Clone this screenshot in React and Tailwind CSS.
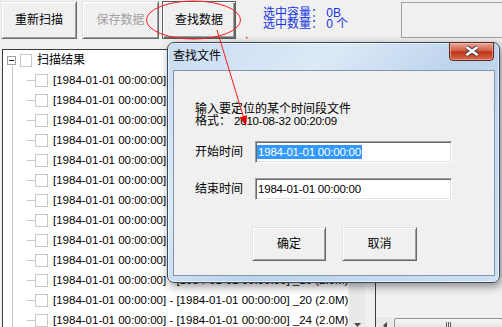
import React from 'react';

const font = "font-['Liberation_Sans','Noto_Sans_CJK_SC',sans-serif]";
const btn3d =
  'bg-[#f0f0f0] border border-t-[#e3e3e3] border-l-[#e3e3e3] border-r-[#696969] border-b-[#696969] shadow-[inset_1px_1px_#ffffff,inset_-1px_-1px_#a0a0a0]';
const sunken =
  'bg-white border border-t-[#a0a0a0] border-l-[#a0a0a0] border-r-white border-b-white shadow-[inset_1px_1px_#696969,inset_-1px_-1px_#e3e3e3]';
const stamp = '[1984-01-01 00:00:00]';
const suffixes = ['_00', '_01', '_02', '_04', '_05', '_06', '_08', '_10', '_12', '_14', '_16', '_20', '_24'];

function Toolbar() {
  return (
    <div className="flex h-[40px] items-start">
      <button className={`ml-[1px] mt-[1px] w-[76px] h-[38px] ${btn3d} text-[12px] leading-[14px]`}>
        重新扫描
      </button>
      <button className={`ml-[5px] mt-[1px] w-[77px] h-[38px] ${btn3d} text-[12px] leading-[14px] text-[#a0a0a0]`}>
        保存数据
      </button>
      <button className="ml-[3px] mt-[1px] w-[74px] h-[38px] bg-[#f0f0f0] border border-[#5c5c5c] shadow-[inset_1px_1px_#ffffff,inset_-1px_-1px_#696969,inset_-2px_-2px_#a0a0a0] text-[12px] leading-[14px]">
        查找数据
      </button>
      <div className="ml-[27px] mt-[8px] text-[12px] leading-[11px] text-[#1535e0] whitespace-nowrap">
        <div>选中容量： 0B</div>
        <div>选中数量： 0 个</div>
      </div>
      <div className="ml-auto mt-[2px] w-[101px] h-[36px] border border-r-0 border-[#a0a0a0]" />
    </div>
  );
}

function TreeView() {
  return (
    <div className="ml-[2px] w-[388px] h-[284px] flex border-l border-t border-[#3c3c3c] bg-white">
      <div className="relative flex-1 overflow-hidden">
        <div className="absolute left-[9px] top-[16px] bottom-0 w-px bg-[#c8c8c8]" />
        <div className="h-[20px] flex items-center">
          <div className="ml-[4px] w-[9px] h-[9px] border border-[#a0a0a0] bg-white flex items-center justify-center">
            <div className="w-[5px] h-px bg-[#222]" />
          </div>
          <div className="ml-[4px] w-[12px] h-[13px] border border-[#c8c8c8] bg-white" />
          <span className="ml-[5px] text-[12px] leading-[14px]">扫描结果</span>
        </div>
        {suffixes.map((s) => (
          <div key={s} className="h-[20px] flex items-center">
            <div className="ml-[24px] w-[8px] h-px bg-[#c8c8c8]" />
            <div className="w-[13px] h-[13px] border border-[#c8c8c8] bg-white" />
            <span className="ml-[5px] text-[11.5px] tracking-[0px] leading-[14px] whitespace-nowrap">
              {stamp} - {stamp} {s} (2.0M)
            </span>
          </div>
        ))}
      </div>
      <div className="w-[17px] flex flex-col bg-[#e9e9e9] border-l border-[#f6f6f6]">
        <div className="flex-1" />
        <div className="h-[17px] flex items-center justify-center">
          <svg width="7" height="4" viewBox="0 0 7 4">
            <path d="M0 0 L7 0 L3.5 4 Z" fill="#4a4a4a" />
          </svg>
        </div>
      </div>
    </div>
  );
}

function RightPanel() {
  return (
    <div className="ml-[10px] flex-1 h-[284px] border-l border-[#3c3c3c] bg-[#f0f0f0] flex flex-col">
      <div className="flex-1" />
      <div className="h-[17px] flex bg-[#e9e9e9] border-t border-[#f6f6f6]">
        <div className="w-[17px] flex items-center justify-center">
          <svg width="4" height="7" viewBox="0 0 4 7">
            <path d="M4 0 L4 7 L0 3.5 Z" fill="#4a4a4a" />
          </svg>
        </div>
        <div className="ml-[1px] mt-[1px] w-[109px] h-[15px] rounded-[2px] border border-[#979797] bg-gradient-to-b from-[#f6f6f6] to-[#dadada] flex items-center justify-center gap-[1px]">
          <div className="w-px h-[7px] bg-[#606060]" />
          <div className="w-px h-[7px] bg-[#606060]" />
          <div className="w-px h-[7px] bg-[#606060]" />
        </div>
      </div>
    </div>
  );
}

function FindDialog() {
  return (
    <div className="absolute left-[167px] top-[42px] w-[333px] h-[241px] rounded-[7px] border border-[#3a4a5e] bg-[linear-gradient(135deg,#c8dcf1,#dce9f7_30%,#bcd3ec_55%,#cde0f4)] shadow-[2px_3px_10px_rgba(0,0,0,0.45),inset_0_0_0_1px_rgba(255,255,255,0.55)] pt-[27px] pl-[5px] pr-[4px] pb-[6px] flex flex-col">
      <div className="absolute left-[5px] top-[6px] text-[12px] leading-[14px]">查找文件</div>
      <div className="absolute right-[5px] top-[-1px] w-[45px] h-[19px] rounded-b-[4px] border border-[#5a2a20] bg-[linear-gradient(to_bottom,#e9a99b,#d35e45_45%,#bd3418_52%,#d66a4e)] shadow-[inset_0_0_0_1px_rgba(255,200,190,0.5)]">
        <svg width="45" height="19" viewBox="0 0 45 19" className="absolute left-[-1px] top-[-1px]">
          <path d="M17.5 5 L28.5 13 M28.5 5 L17.5 13" stroke="#3a3a3a" strokeWidth="4.5" />
          <path d="M17.5 5 L28.5 13 M28.5 5 L17.5 13" stroke="#ffffff" strokeWidth="2.6" />
        </svg>
      </div>
      <div className="flex-1 bg-[#f0f0f0] border border-[#8196ad] pl-[21px] flex flex-col">
        <div className="mt-[32px] text-[12px] leading-[12px]">
          <div>输入要定位的某个时间段文件</div>
          <div className="flex">
            <span className="w-[39px]">格式：</span>
            <span className="text-[11.5px] tracking-[-0.2px]">2010-08-32 00:20:09</span>
          </div>
        </div>
        <div className="mt-[14px] flex items-center">
          <span className="w-[60px] text-[12px] leading-[14px]">开始时间</span>
          <div className={`w-[197px] h-[22px] ${sunken} flex items-center pl-[1px]`}>
            <span className="px-[1px] bg-[#3399ff] text-white text-[11.5px] tracking-[-0.2px] leading-[14px]">
              1984-01-01 00:00:00
            </span>
          </div>
        </div>
        <div className="mt-[15px] flex items-center">
          <span className="w-[60px] text-[12px] leading-[14px]">结束时间</span>
          <div className={`w-[197px] h-[22px] ${sunken} flex items-center pl-[2px]`}>
            <span className="text-[11.5px] tracking-[-0.2px] leading-[14px]">1984-01-01 00:00:00</span>
          </div>
        </div>
        <div className="mt-[27px] ml-[57px] flex gap-[16px]">
          <button className={`w-[74px] h-[34px] ${btn3d} text-[12px] leading-[14px]`}>确定</button>
          <button className={`w-[75px] h-[34px] ${btn3d} text-[12px] leading-[14px]`}>取消</button>
        </div>
      </div>
    </div>
  );
}

export default function App() {
  return (
    <div className={`relative w-[502px] h-[327px] overflow-hidden bg-[#f0f0f0] text-black ${font}`}>
      <Toolbar />
      <div className="flex mt-[9px]">
        <TreeView />
        <RightPanel />
      </div>
      <FindDialog />
      <svg className="absolute inset-0 pointer-events-none" width="502" height="327" viewBox="0 0 502 327">
        <ellipse cx="193.5" cy="20" rx="47" ry="19" fill="none" stroke="#ff1a1a" strokeWidth="1" />
        <line x1="217" y1="30" x2="243.5" y2="117" stroke="#ff1a1a" strokeWidth="1" />
        <polygon points="246,126 247,115.3 239.5,117.6" fill="#e00000" />
        <rect x="246" y="37" width="1.5" height="1.5" fill="#ff1a1a" />
      </svg>
    </div>
  );
}
